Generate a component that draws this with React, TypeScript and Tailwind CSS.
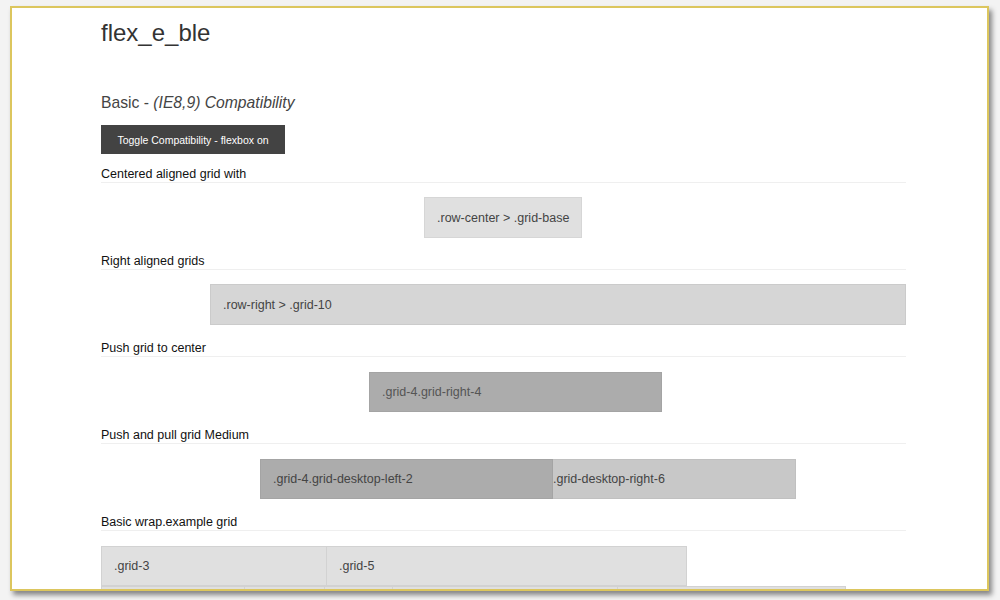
const sections = [
  { title: "Centered aligned grid with" },
  { title: "Right aligned grids" },
  { title: "Push grid to center" },
  { title: "Push and pull grid Medium" },
  { title: "Basic wrap.example grid" },
]

function Heading({ children, first }: { children: React.ReactNode; first?: boolean }) {
  return (
    <div
      className={`${first ? "mt-[12px]" : "mt-[15px]"} h-[17px] border-b border-[#efefef] text-[12.5px] leading-[16px] text-[#111]`}
    >
      {children}
    </div>
  )
}

const boxText = "text-[12.5px] leading-[16px] text-[#444] flex items-center"

export default function App() {
  return (
    <div className="w-[1000px] h-[600px] bg-[#f3f3f3] pt-[6px] pl-[10px] font-['Liberation_Sans',Arial,sans-serif]">
      <div className="w-[979px] h-[585px] bg-white border-2 border-[#dcc65e] shadow-[3px_4px_5px_rgba(0,0,0,0.45)] overflow-hidden">
        <div className="ml-[89px] w-[805px]">
          <h1 className="pt-[11px] text-[24px] leading-[28px] text-[#333]">flex_e_ble</h1>
          <h2 className="mt-[47px] text-[15.7px] leading-[18px] text-[#444]">
            Basic - <em>(IE8,9) Compatibility</em>
          </h2>
          <button className="mt-[13px] h-[29px] w-[184px] bg-[#434343] text-white text-[10.5px] leading-[12px]">
            Toggle Compatibility - flexbox on
          </button>

          {/* centered */}
          <Heading first>{sections[0].title}</Heading>
          <div className="mt-[14px] flex justify-center">
            <div className={`ml-[-1px] h-[41px] w-[158px] bg-[#e0e0e0] border border-[#d6d6d6] pl-[12px] ${boxText}`}>
              .row-center &gt; .grid-base
            </div>
          </div>

          {/* right */}
          <Heading>{sections[1].title}</Heading>
          <div className="mt-[14px] flex justify-end">
            <div className={`h-[41px] w-[696px] bg-[#d6d6d6] border border-[#cbcbcb] pl-[12px] ${boxText}`}>
              .row-right &gt; .grid-10
            </div>
          </div>

          {/* push */}
          <Heading>{sections[2].title}</Heading>
          <div className="mt-[15px] flex">
            <div className={`ml-[268px] h-[40px] w-[293px] bg-[#acacac] border border-[#a4a4a4] pl-[12px] ${boxText} text-[#555]`}>
              .grid-4.grid-right-4
            </div>
          </div>

          {/* push and pull */}
          <Heading>{sections[3].title}</Heading>
          <div className="mt-[15px] flex">
            <div className={`ml-[159px] h-[40px] w-[293px] bg-[#acacac] border border-[#a4a4a4] pl-[12px] ${boxText}`}>
              .grid-4.grid-desktop-left-2
            </div>
            <div className={`h-[40px] w-[243px] bg-[#c8c8c8] border border-[#c0c0c0] border-l-0 ${boxText}`}>
              .grid-desktop-right-6
            </div>
          </div>

          {/* wrap */}
          <Heading>{sections[4].title}</Heading>
          <div className="mt-[15px] flex flex-wrap w-[745px]">
            <div className={`h-[40px] w-[226px] bg-[#e0e0e0] border border-[#d2d2d2] pl-[12px] ${boxText}`}>
              .grid-3
            </div>
            <div className={`h-[40px] w-[360px] bg-[#e0e0e0] border border-[#d2d2d2] border-l-0 pl-[12px] ${boxText}`}>
              .grid-5
            </div>
            <div className="w-full" />
            <div className="h-[40px] w-[144px] bg-[#e0e0e0] border border-[#d2d2d2]" />
            <div className="h-[40px] w-[80px] bg-[#e0e0e0] border border-l-0 border-[#d2d2d2]" />
            <div className="h-[40px] w-[68px] bg-[#e0e0e0] border border-l-0 border-[#d2d2d2]" />
            <div className="h-[40px] w-[225px] bg-[#e0e0e0] border border-l-0 border-[#d2d2d2]" />
            <div className="h-[40px] w-[228px] bg-[#e0e0e0] border border-l-0 border-[#d2d2d2]" />
          </div>
        </div>
      </div>
    </div>
  )
}
